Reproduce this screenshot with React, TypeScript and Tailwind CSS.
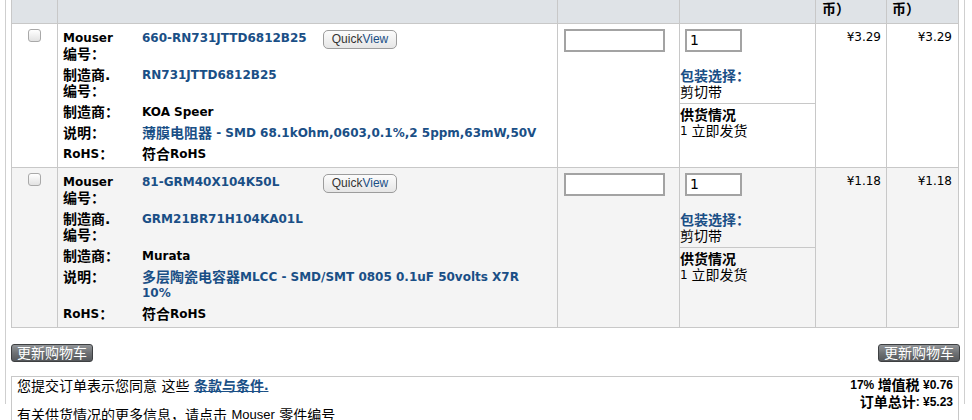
import React from "react";

const LINK = "text-[#1a4f86]";
const BORDER = "border-[#c8c8c8]";

function C({ children, bold }: { children: React.ReactNode; bold?: boolean }) {
  return <span className={"align-top text-[14px] " + (bold ? "font-bold" : "font-normal")}>{children}</span>;
}

function Checkbox() {
  return (
    <div className="w-[13px] h-[13px] rounded-[3px] border border-[#a9a9a9] bg-linear-to-b from-white to-[#e2e2e2]" />
  );
}

function QuickView() {
  return (
    <div className="w-[74px] h-[19px] rounded-[5px] border border-[#9c9c9c] bg-linear-to-b from-[#fcfcfc] to-[#e6e6e6] font-['Liberation_Sans',sans-serif] text-[12px] leading-[17px] text-center font-normal">
      <span className="text-[#333]">Quick</span>
      <span className={LINK}>View</span>
    </div>
  );
}

function Entry({ label, children, extra }: { label: React.ReactNode; children: React.ReactNode; extra?: React.ReactNode }) {
  return (
    <div className="flex">
      <div className="w-[79px] shrink-0 font-bold">{label}</div>
      <div className={extra ? "w-[181px] shrink-0 font-bold whitespace-nowrap" : "font-bold whitespace-nowrap"}>{children}</div>
      {extra}
    </div>
  );
}

function Line({ children, className = "" }: { children: React.ReactNode; className?: string }) {
  return <div className={"h-[16px] " + className}>{children}</div>;
}

function ItemRow({
  bg,
  mouser,
  mfrNo,
  mfr,
  desc,
  price,
}: {
  bg: string;
  mouser: string;
  mfrNo: string;
  mfr: string;
  desc: React.ReactNode;
  price: string;
}) {
  const cell = "border-r border-b " + BORDER;
  return (
    <div className={"grid grid-cols-[46px_500px_122px_136px_71px_72px] " + bg}>
      <div className={cell + " flex justify-center pt-[5px]"}>
        <Checkbox />
      </div>
      <div className={cell + " pt-[6px] pb-[5px] pl-[5px] flex flex-col gap-[5px]"}>
        <Entry
          label={
            <>
              <Line>Mouser</Line>
              <Line>
                <C bold>编号：</C>
              </Line>
            </>
          }
          extra={<QuickView />}
        >
          <Line>
            <span className={LINK}>{mouser}</span>
          </Line>
        </Entry>
        <Entry
          label={
            <>
              <Line>
                <C bold>制造商.</C>
              </Line>
              <Line>
                <C bold>编号：</C>
              </Line>
            </>
          }
        >
          <Line>
            <span className={LINK}>{mfrNo}</span>
          </Line>
        </Entry>
        <Entry
          label={
            <Line>
              <C bold>制造商：</C>
            </Line>
          }
        >
          <Line>{mfr}</Line>
        </Entry>
        <Entry
          label={
            <Line>
              <C bold>说明：</C>
            </Line>
          }
        >
          <div className={LINK}>{desc}</div>
        </Entry>
        <Entry
          label={
            <Line>
              RoHS<C bold>：</C>
            </Line>
          }
        >
          <Line>
            <C bold>符合</C>RoHS
          </Line>
        </Entry>
      </div>
      <div className={cell + " pt-[5px] pl-[6px]"}>
        <div className="w-[101px] h-[23px] border-2 border-[#a3a3a3] bg-white" />
      </div>
      <div className={cell + " pt-[5px]"}>
        <div className="ml-[5px] w-[57px] h-[23px] border-2 border-[#a3a3a3] bg-white pl-[3px] text-[14px] leading-[19px]">
          1
        </div>
        <div className={"mt-[16px] pb-[3px] border-b " + BORDER}>
          <Line className={LINK}>
            <C bold>包装选择：</C>
          </Line>
          <Line>
            <C>剪切带</C>
          </Line>
        </div>
        <div className="pt-[3px]">
          <Line>
            <C bold>供货情况</C>
          </Line>
          <Line>
            1 <C>立即发货</C>
          </Line>
        </div>
      </div>
      <div className={cell + " pt-[5px] pr-[5px] text-right"}>{price}</div>
      <div className={cell + " pt-[5px] pr-[6px] text-right"}>{price}</div>
    </div>
  );
}

function UpdateButton() {
  return (
    <div className="w-[82px] h-[18px] rounded-[3px] border border-[#3e4042] bg-linear-to-b from-[#939699] via-[#6e7174] to-[#55585b] text-white text-center leading-[16px] overflow-hidden">
      <C>更新购物车</C>
    </div>
  );
}

export default function App() {
  const hcell = "border-r border-b h-[40px] " + BORDER;
  return (
    <div className="w-[972px] h-[420px] overflow-hidden bg-white text-black text-[12px] leading-[16px] font-['DejaVu_Sans','Noto_Sans_CJK_SC',sans-serif]">
      <div className="ml-[5px] w-[960px] h-[420px] border-l border-r border-[#cfcfcf] pl-[5px]">
        <div className="-mt-[16px]">
          <div className={"w-[948px] border-l " + BORDER}>
            <div className="grid grid-cols-[46px_500px_122px_136px_71px_72px] bg-[#dfe3e7]">
              <div className={hcell} />
              <div className={hcell} />
              <div className={hcell} />
              <div className={hcell} />
              <div className={hcell + " flex flex-col justify-end pb-[6px] pl-[6px] font-bold whitespace-nowrap overflow-hidden"}>
                <Line>
                  <C bold>单价（人民</C>
                </Line>
                <Line>
                  <C bold>币）</C>
                </Line>
              </div>
              <div className={hcell + " flex flex-col justify-end pb-[6px] pl-[5px] font-bold whitespace-nowrap overflow-hidden"}>
                <Line>
                  <C bold>总价（人民</C>
                </Line>
                <Line>
                  <C bold>币）</C>
                </Line>
              </div>
            </div>
            <ItemRow
              bg="bg-white"
              mouser="660-RN731JTTD6812B25"
              mfrNo="RN731JTTD6812B25"
              mfr="KOA Speer"
              desc={
                <Line>
                  <C bold>薄膜电阻器</C> - SMD 68.1kOhm,0603,0.1%,2 5ppm,63mW,50V
                </Line>
              }
              price="¥3.29"
            />
            <ItemRow
              bg="bg-[#f4f4f4]"
              mouser="81-GRM40X104K50L"
              mfrNo="GRM21BR71H104KA01L"
              mfr="Murata"
              desc={
                <>
                  <Line>
                    <C bold>多层陶瓷电容器</C>MLCC - SMD/SMT 0805 0.1uF 50volts X7R
                  </Line>
                  <Line>10%</Line>
                </>
              }
              price="¥1.18"
            />
          </div>

          <div className="mt-[16px] w-[949px] flex justify-between">
            <UpdateButton />
            <UpdateButton />
          </div>

          <div className={"mt-[14px] w-[948px] h-[60px] border-l border-t border-r flex justify-between " + BORDER}>
            <div className="pl-[5px] pt-[1px]">
              <Line>
                <C>您提交订单表示您同意 这些 </C>
                <a className={LINK + " font-bold underline"}>
                  <C bold>条款与条件</C>.
                </a>
              </Line>
              <Line className="mt-[13px]">
                <C>有关供货情况的更多信息，请点击 </C>
                <span className="font-['Liberation_Sans',sans-serif] text-[13px]">Mouser</span>
                <C> 零件编号</C>
              </Line>
            </div>
            <div className="pr-[5px] text-right font-bold font-['Liberation_Sans','Noto_Sans_CJK_SC',sans-serif]">
              <div className="h-[17px] leading-[17px]">
                17% <C bold>增值税</C> ¥0.76
              </div>
              <div className="h-[17px] leading-[17px]">
                <C bold>订单总计</C>: ¥5.23
              </div>
            </div>
          </div>
        </div>
      </div>
    </div>
  );
}
